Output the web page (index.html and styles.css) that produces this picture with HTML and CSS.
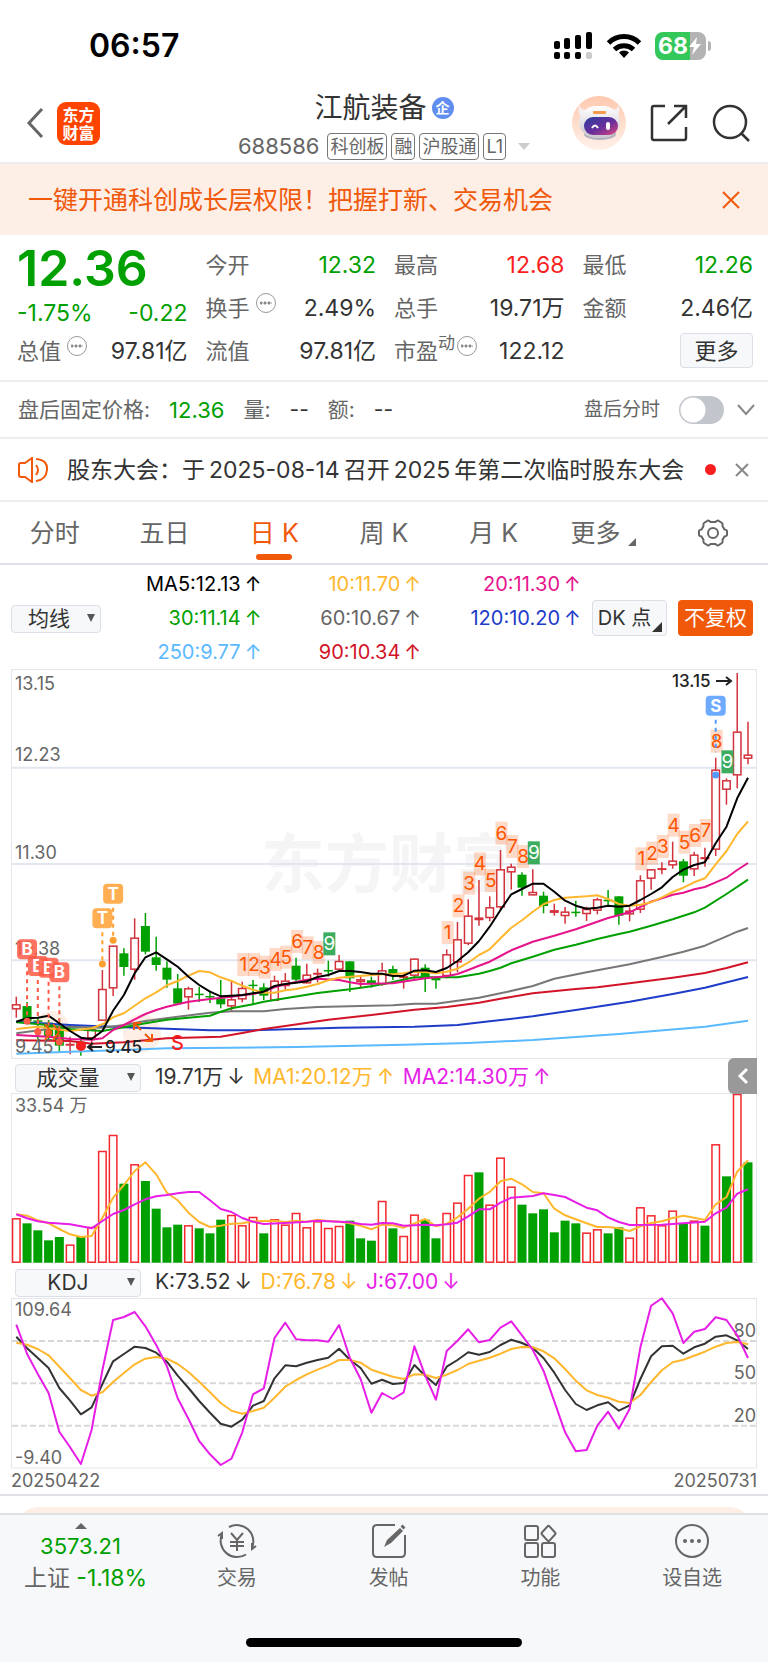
FILE: index.html
```html
<!DOCTYPE html>
<html lang="zh-CN">
  <head>
    <meta charset="UTF-8" />
    <meta name="viewport" content="width=device-width, initial-scale=1.0" />
    <title>江航装备 688586</title>
    <link rel="stylesheet" href="styles.css">
  </head>
  <body>
    <div class="status">
      <span class="time">06:57</span>
      <div class="status-icons">
        <svg width="42" height="28" viewBox="0 0 42 28">
          <rect x="1" y="9" width="6" height="8" rx="2" />
          <rect x="11" y="6" width="6" height="11" rx="2" />
          <rect x="22" y="3" width="6" height="14" rx="2" />
          <rect x="33" y="0" width="6" height="17" rx="2" />
          <rect x="1" y="20" width="6" height="7" rx="2" />
          <rect x="11" y="20" width="6" height="7" rx="2" />
          <rect x="22" y="20" width="6" height="7" rx="2" />
          <rect x="33" y="20" width="6" height="7" rx="2" fill="#ccc" />
        </svg>
        <svg width="36" height="26" viewBox="0 0 36 26" fill="none" stroke="#000" stroke-width="5">
          <path d="M2.500 10a22 22 0 0 1 31 0" />
          <path d="M8.500 16.500a14 14 0 0 1 19 0" />
          <path d="M18 25l-5-5.500a7.500 7.500 0 0 1 10 0z" fill="#000" stroke="none" />
        </svg>
        <div class="battery">
          <span>68</span>
          <svg width="14" height="20" viewBox="0 0 14 20"><path d="M9 1L1 11h5l-2 8 9-11H8z" fill="#fff" /></svg>
        </div>
      </div>
    </div>

    <header class="header">
      <div class="header-left">
        <button class="icon-btn" aria-label="返回">
          <svg width="18" height="32" viewBox="0 0 18 32" fill="none" stroke="#666" stroke-width="3"><path d="M16 2L3 16l13 14" /></svg>
        </button>
        <div class="logo">东方<br>财富</div>
      </div>
      <div class="header-mid">
        <h1>江航装备<span class="qi">企</span></h1>
        <div class="code">
          <span class="num">688586</span>
          <span class="tag">科创板</span><span class="tag">融</span><span class="tag">沪股通</span><span class="tag">L1</span>
          <i class="tri-light"></i>
        </div>
      </div>
      <div class="header-right">
        <svg width="54" height="54" viewBox="0 0 54 54">
          <defs>
            <linearGradient id="halo" x1="0" y1="0" x2="0" y2="1"><stop offset="0" stop-color="#ffc8ae" /><stop offset="1" stop-color="#fff1ea" /></linearGradient>
            <linearGradient id="face" x1="0" y1="0" x2="1" y2="1"><stop offset="0" stop-color="#2b3ea0" /><stop offset=".55" stop-color="#6a2f9c" /><stop offset="1" stop-color="#e0457e" /></linearGradient>
            <linearGradient id="head" x1="0" y1="0" x2="0" y2="1"><stop offset="0" stop-color="#fff" /><stop offset="1" stop-color="#c9c6cf" /></linearGradient>
          </defs>
          <circle cx="27" cy="27" r="27" fill="url(#halo)" />
          <path d="M7 9q-2 9 4 14l7-8q-8 0-11-6zM47 9q2 9-4 14l-7-8q8 0 11-6z" fill="#f4f0f2" />
          <ellipse cx="28" cy="38" rx="16" ry="6" fill="#aeb0bc" />
          <rect x="7" y="10" width="41" height="32" rx="17" fill="url(#head)" />
          <rect x="21" y="15" width="13" height="3" rx="1" fill="#f49a4c" />
          <rect x="12" y="21" width="34" height="18" rx="9" fill="url(#face)" />
          <path d="M20 32q3-5 6 0" fill="none" stroke="#fff" stroke-width="2" />
          <rect x="34" y="26" width="4" height="8" rx="2" fill="#fff" />
        </svg>
        <button class="icon-btn" aria-label="分享">
          <svg width="38" height="38" viewBox="0 0 38 38" fill="none" stroke="#333" stroke-width="2.500"><path d="M15 2H4q-2 0-2 2v30q0 2 2 2h30q2 0 2-2V23M24 2h12v12M36 2L18 20" /></svg>
        </button>
        <button class="icon-btn" aria-label="搜索">
          <svg width="38" height="38" viewBox="0 0 38 38" fill="none" stroke="#333" stroke-width="2.500"><circle cx="18" cy="18" r="16" /><path d="M29 29l8 8" /></svg>
        </button>
      </div>
    </header>

    <div class="banner">
      <a href="#">一键开通科创成长层权限！把握打新、交易机会</a>
      <button class="icon-btn" aria-label="关闭">
        <svg width="18" height="18" viewBox="0 0 18 18" stroke="#f0590a" stroke-width="2"><path d="M1 1l16 16M17 1L1 17" /></svg>
      </button>
    </div>

    <section class="quote">
      <div class="col">
        <div class="price">12.36</div>
        <div class="row change green"><span>-1.75%</span><span>-0.22</span></div>
        <div class="row"><label>总值<i class="more-dot"></i></label><span>97.81亿</span></div>
      </div>
      <div class="col">
        <div class="row"><label>今开</label><span class="green">12.32</span></div>
        <div class="row"><label>换手<i class="more-dot"></i></label><span>2.49%</span></div>
        <div class="row"><label>流值</label><span>97.81亿</span></div>
      </div>
      <div class="col">
        <div class="row"><label>最高</label><span class="red">12.68</span></div>
        <div class="row"><label>总手</label><span>19.71万</span></div>
        <div class="row"><label>市盈<sup>动</sup><i class="more-dot"></i></label><span>122.12</span></div>
      </div>
      <div class="col">
        <div class="row"><label>最低</label><span class="green">12.26</span></div>
        <div class="row"><label>金额</label><span>2.46亿</span></div>
        <div class="row end"><button class="btn-more">更多</button></div>
      </div>
    </section>

    <section class="after">
      <span>盘后固定价格:</span>
      <span class="green">12.36</span>
      <span>量:</span><span class="dark">--</span>
      <span>额:</span><span class="dark">--</span>
      <label class="after-label" for="after-switch">盘后分时</label>
      <input type="checkbox" class="switch" id="after-switch" />
      <svg width="18" height="12" viewBox="0 0 18 12" fill="none" stroke="#888" stroke-width="2"><path d="M1 1l8 9 8-9" /></svg>
    </section>

    <section class="notice">
      <svg width="31" height="26" viewBox="0 0 31 26" fill="none" stroke="#f0590a" stroke-width="2">
        <path d="M1 8q0-2 2-2h4l7-5v24l-7-5H3q-2 0-2-2zM18 8q4 5 0 10M18 2q12 1 11 11t-11 11" />
      </svg>
      <a href="#">股东大会：于<b>2025-08-14</b>召开<b>2025</b>年第二次临时股东大会</a>
      <i class="red-dot"></i>
      <button class="icon-btn" aria-label="关闭公告">
        <svg width="14" height="14" viewBox="0 0 14 14" stroke="#888" stroke-width="2"><path d="M1 1l12 12M13 1L1 13" /></svg>
      </button>
    </section>

    <nav class="tabs">
      <button>分时</button>
      <button>五日</button>
      <button class="active">日 K</button>
      <button>周 K</button>
      <button>月 K</button>
      <button>更多<i class="corner"></i></button>
      <button aria-label="设置">
        <svg width="30" height="28" viewBox="0 0 30 28" fill="none" stroke="#666" stroke-width="2">
          <path d="M10 1.500q1.500 0 2.500 1.500h5q1-1.500 2.500-1.500l4 2.500q1 1 .5 3l2 3.500q2.500.500 2.500 1.500v4q0 1-2.500 1.500l-2 3.500q.5 2-.5 3l-4 2.500q-1.500 0-2.500-1.500h-5q-1 1.500-2.500 1.500l-4-2.500q-1-1-.5-3l-2-3.500Q1 17 1 16v-4q0-1 2.500-1.500l2-3.500q-.5-2 .5-3z" />
          <circle cx="15" cy="14" r="5" />
        </svg>
      </button>
    </nav>

    <section class="ma">
      <div class="select-box ma-select">
        <select aria-label="主图指标"><option>均线</option></select>
      </div>
      <div class="ma-list">
        <span class="c-black">MA5:12.13<i>↑</i></span><span class="c-yellow">10:11.70<i>↑</i></span><span class="c-pink">20:11.30<i>↑</i></span>
        <span class="c-green">30:11.14<i>↑</i></span><span class="c-gray">60:10.67<i>↑</i></span><span class="c-blue">120:10.20<i>↑</i></span>
        <span class="c-sky">250:9.77<i>↑</i></span><span class="c-red">90:10.34<i>↑</i></span>
      </div>
      <button class="btn-dk">DK 点<i class="corner"></i></button>
      <button class="btn-fq">不复权</button>
    </section>

    <main class="charts">
      <svg id="kline" class="chart" viewBox="0 0 746 389"></svg>
      <div class="legend">
        <div class="select-box">
          <select aria-label="副图指标一"><option>成交量</option></select>
        </div>
        <span class="c-dark">19.71万<i>↓</i></span>
        <span class="c-yellow">MA1:20.12万<i>↑</i></span>
        <span class="c-purple">MA2:14.30万<i>↑</i></span>
        <button class="collapse" aria-label="展开侧栏">
          <svg width="12" height="18" viewBox="0 0 12 18" fill="none" stroke="#fff" stroke-width="3"><path d="M10 2L3 9l7 7" /></svg>
        </button>
      </div>
      <svg id="volume" class="chart" viewBox="0 0 746 170"></svg>
      <div class="legend">
        <div class="select-box">
          <select aria-label="副图指标二"><option>KDJ</option></select>
        </div>
        <span class="c-dark">K:73.52<i>↓</i></span>
        <span class="c-yellow">D:76.78<i>↓</i></span>
        <span class="c-purple">J:67.00<i>↓</i></span>
      </div>
      <svg id="kdj" class="chart" viewBox="0 0 746 170"></svg>
      <div class="dates"><span>20250422</span><span>20250731</span></div>
    </main>

    <div class="card-peek"></div>

    <footer class="footer">
      <nav class="bottom-nav">
        <a href="#" class="index green">
          <i class="tri-up"></i>
          <span>3573.21</span>
          <span class="index-change"><em>上证</em> -1.18%</span>
        </a>
        <a href="#">
          <svg width="40" height="36" viewBox="0 0 40 36" fill="none" stroke="#666" stroke-width="2">
            <path d="M12 4a16.500 16.500 0 0 1 23 21M29 31.500A16.500 16.500 0 0 1 5 11M1 13l4-3v6M39 23l-4 3v-6" />
            <path d="M14 10l6 7 6-7M20 17v11M13 19h14M13 23h14" />
          </svg>
          交易
        </a>
        <a href="#">
          <svg width="36" height="36" viewBox="0 0 36 36" fill="none" stroke="#666" stroke-width="2">
            <path d="M24 2H6q-4 0-4 4v24q0 4 4 4h24q4 0 4-4V12" />
            <path d="M13 24l3-7L29 5l3 3-12 12z" fill="#666" stroke="none" /><path d="M31 5l2-2" stroke-width="4" />
          </svg>
          发帖
        </a>
        <a href="#">
          <svg width="34" height="36" viewBox="0 0 34 36" fill="none" stroke="#666" stroke-width="2">
            <rect x="2" y="3" width="13" height="14" rx="2" /><rect x="2" y="20" width="13" height="14" rx="2" /><rect x="19" y="20" width="13" height="14" rx="2" />
            <path d="M24.500 3.500q1-1.500 2 0l5.500 6q1 1 0 2l-5.500 6q-1 1.500-2 0l-5.500-6q-1-1 0-2z" />
          </svg>
          功能
        </a>
        <a href="#">
          <svg width="36" height="36" viewBox="0 0 36 36" fill="none" stroke="#666" stroke-width="2">
            <circle cx="18" cy="18" r="16" />
            <g fill="#666" stroke="none"><circle cx="11" cy="18" r="2" /><circle cx="18" cy="18" r="2" /><circle cx="25" cy="18" r="2" /></g>
          </svg>
          设自选
        </a>
      </nav>
      <div class="home-bar"></div>
    </footer>
    <script src="script.js"></script>
  </body>
</html>
```
FILE: styles.css
```css
* {
  margin: 0;
  padding: 0;
  box-sizing: border-box;
}
body {
  font-family: Inter, "Noto Sans CJK SC", sans-serif;
  font-size: 22px;
  line-height: 30px;
  color: #333;
  background: #fff;
  white-space: nowrap;
}
button,
select {
  font: inherit;
  color: inherit;
  border: 0;
  background: none;
  white-space: nowrap;
}
a {
  color: inherit;
  text-decoration: none;
}
i,
em {
  font-style: normal;
}
b {
  font-weight: 400;
}
svg {
  display: block;
  flex: none;
}
.icon-btn {
  display: block;
}
.green {
  color: #00a000;
}
.red {
  color: #f91f1f;
}

/* 状态栏 */
.status {
  height: 82px;
  padding: 10px 56px 0 89px;
  display: flex;
  align-items: center;
  justify-content: space-between;
}
.time {
  font-size: 32px;
  font-weight: 600;
  color: #000;
}
.status-icons {
  display: flex;
  align-items: center;
  gap: 11px;
}
.battery {
  width: 51px;
  height: 28px;
  margin: 0 6px 0 2px;
  padding-left: 3px;
  display: flex;
  align-items: center;
  position: relative;
  border-radius: 8px;
  background: linear-gradient(90deg, #34c759 69%, #b3b3b3 69%);
  font-size: 23px;
  font-weight: 700;
  color: #fff;
}
.battery::after {
  content: "";
  width: 3px;
  height: 10px;
  position: absolute;
  right: -5px;
  top: 9px;
  border-radius: 0 3px 3px 0;
  background: #b3b3b3;
}

/* 头部 */
.header {
  height: 82px;
  padding: 0 18px;
  display: grid;
  grid-template-columns: 1fr auto 1fr;
  align-items: center;
  border-bottom: 2px solid #eceef1;
}
.header-left {
  padding-left: 8px;
  display: flex;
  align-items: center;
  gap: 13px;
}
.logo {
  width: 43px;
  height: 43px;
  padding-top: 4px;
  border-radius: 9px;
  background: #ff4400;
  color: #fff;
  font-size: 16px;
  font-weight: 700;
  line-height: 18px;
  text-align: center;
}
.header-mid {
  padding-top: 6px;
  text-align: center;
}
h1 {
  display: flex;
  align-items: center;
  justify-content: center;
  font-size: 28px;
  line-height: 40px;
  font-weight: 400;
}
.qi {
  width: 22px;
  height: 22px;
  margin-left: 5px;
  border-radius: 50%;
  background: #5f8df0;
  color: #fff;
  font-size: 14px;
  line-height: 21px;
  font-weight: 700;
}
.code {
  display: flex;
  align-items: center;
  gap: 4px;
  color: #666;
  line-height: 36px;
}
.code .num {
  margin-right: 4px;
  font-size: 22px;
}
.tag {
  padding: 0 2px;
  border: 1px solid #777;
  border-radius: 4px;
  font-size: 18px;
  line-height: 25px;
}
.tri-light {
  margin-left: 8px;
  border: 6px solid transparent;
  border-top: 7px solid #ccc;
  border-bottom: 0;
}
.header-right {
  display: flex;
  align-items: center;
  justify-content: flex-end;
  gap: 24px;
}

.banner {
  height: 71px;
  padding: 0 28px;
  display: flex;
  align-items: center;
  justify-content: space-between;
  background: #fdeee6;
  color: #f0590a;
  font-size: 25px;
}

/* 行情 */
.quote {
  padding: 8px 15px 8px 17px;
  display: grid;
  grid-template-columns: repeat(4, 1fr);
  gap: 18px;
  border-bottom: 2px solid #eceef1;
}
.row {
  height: 43px;
  display: flex;
  align-items: center;
  justify-content: space-between;
}
.row span {
  font-size: 23px;
}
.row label {
  display: flex;
  align-items: center;
  color: #666;
}
.price {
  height: 54px;
  font-size: 50px;
  line-height: 50px;
  font-weight: 600;
  color: #00a000;
}
.change {
  height: 32px;
}
.end {
  justify-content: flex-end;
}
sup {
  margin-bottom: 16px;
  font-size: 17px;
  line-height: 20px;
}
.more-dot {
  width: 20px;
  height: 20px;
  margin: 0 0 10px 6px;
  border: 1px solid #999;
  border-radius: 50%;
  background: radial-gradient(circle at 2px 2px, #888 1px, transparent 2px) 3px 7px / 4px 4px repeat-x content-box;
  padding: 0 3px;
}
sup + .more-dot {
  margin-left: 2px;
}
.btn-more {
  width: 73px;
  height: 35px;
  border: 1px solid #dcdfe6;
  border-radius: 4px;
  background: #f7f8fa;
}

.after {
  height: 57px;
  padding: 0 13px 0 18px;
  display: flex;
  align-items: center;
  gap: 19px;
  border-bottom: 2px solid #eceef1;
  color: #666;
  font-size: 21px;
}
.after .green {
  font-size: 22px;
}
.dark {
  color: #333;
}
.after-label {
  margin-left: auto;
  font-size: 19px;
}
.switch {
  width: 45px;
  height: 28px;
  margin-right: -6px;
  appearance: none;
  border-radius: 14px;
  background: radial-gradient(circle at 14px 14px, #fff 12px, transparent 13px) #c2c5cc;
}

.notice {
  height: 63px;
  padding: 0 19px 0 18px;
  display: flex;
  align-items: center;
  border-bottom: 2px solid #eceef1;
  font-size: 23px;
}
.notice a {
  margin: 0 auto 0 18px;
}
.notice b {
  padding: 0 4px;
}
.red-dot {
  width: 11px;
  height: 11px;
  margin-right: 19px;
  border-radius: 50%;
  background: #f91f1f;
}

/* 周期切换 */
.tabs {
  height: 63px;
  display: grid;
  grid-template-columns: repeat(7, 1fr);
  border-bottom: 2px solid #dfe1e7;
  color: #666;
  font-size: 25px;
}
.tabs button {
  display: flex;
  align-items: center;
  justify-content: center;
  position: relative;
}
.tabs .active {
  color: #f0590a;
}
.tabs .active::after {
  content: "";
  width: 36px;
  height: 6px;
  position: absolute;
  bottom: 3px;
  left: 50%;
  transform: translate(-50%, 0);
  border-radius: 3px;
  background: #f0590a;
}
.corner {
  border: 4px solid;
  border-top-color: transparent;
  border-left-color: transparent;
}
.tabs .corner {
  margin: 18px 0 0 8px;
}

/* 均线 */
.ma {
  padding: 2px 15px 0 11px;
  display: flex;
  align-items: center;
  font-size: 20px;
}
.ma-list {
  flex: 1;
  margin-right: 12px;
  display: grid;
  grid-template-columns: repeat(3, 1fr);
  grid-auto-rows: 34px;
  line-height: 34px;
  text-align: right;
}
.ma-list i,
.legend i {
  display: inline-block;
  width: 14px;
  margin-left: 4px;
  text-align: center;
}
.ma-list span {
  padding-right: 2px;
}
.select-box {
  width: 126px;
  height: 28px;
  position: relative;
}
.select-box::after {
  content: "";
  position: absolute;
  right: 6px;
  top: 10px;
  border: 4px solid transparent;
  border-top: 8px solid #555;
  border-bottom: 0;
  pointer-events: none;
}
.select-box select {
  width: 100%;
  height: 28px;
  padding-right: 20px;
  appearance: none;
  border: 1px solid #dcdfe6;
  border-radius: 4px;
  background: #f7f8fa;
  font-size: 21px;
  line-height: 26px;
  text-align: center;
  text-align-last: center;
}
.ma-select {
  width: 90px;
}
.ma-select select {
  padding-right: 14px;
}
.btn-dk {
  width: 75px;
  height: 36px;
  padding-right: 10px;
  position: relative;
  border: 1px solid #dcdfe6;
  border-radius: 4px;
  background: #f7f8fa;
}
.btn-dk .corner {
  position: absolute;
  right: 4px;
  bottom: 3px;
  border-width: 5px;
}
.btn-fq {
  width: 75px;
  height: 36px;
  margin-left: 11px;
  border-radius: 4px;
  background: #f0590a;
  color: #fff;
  font-size: 21px;
}
.c-black { color: #000; }
.c-dark { color: #333; }
.c-yellow { color: #ffb72e; }
.c-pink { color: #e6148c; }
.c-green { color: #00a000; }
.c-gray { color: #666; }
.c-blue { color: #1e3cc8; }
.c-sky { color: #5ab9ff; }
.c-red { color: #d21428; }
.c-purple { color: #e61ee6; }

/* 图表 */
.charts {
  padding: 0 11px;
}
.chart {
  width: 100%;
  height: auto;
  overflow: visible;
}
.chart text {
  font-size: 18px;
  fill: #666;
}
.chart .frame {
  fill: none;
  stroke: #e4e6ec;
}
.chart .grid {
  stroke: #e2e6ee;
  stroke-width: 2;
}
.chart .dash {
  stroke: #d8d8d8;
  stroke-width: 2;
  stroke-dasharray: 6 3;
}
.chart .line {
  fill: none;
  stroke-width: 2;
  stroke-linejoin: round;
}
.chart .mark {
  stroke-width: 2;
  stroke-dasharray: 4 4;
}
.chart .nine {
  font-size: 19px;
  text-anchor: middle;
  fill: #ff5500;
}
.chart .badge {
  font-size: 17px;
  font-weight: 700;
  text-anchor: middle;
  fill: #fff;
}
.chart .tip {
  font-size: 17px;
  font-weight: 500;
  fill: #222;
}
.chart .sell {
  font-size: 20px;
  font-weight: 500;
  fill: #f91f1f;
}
.chart .watermark {
  font-size: 64px;
  font-weight: 700;
  fill: #f5f5f5;
}
.chart .end {
  text-anchor: end;
}
.legend {
  height: 35px;
  padding: 2px 0 0 4px;
  display: flex;
  align-items: center;
  gap: 12px;
  position: relative;
  font-size: 21px;
}
.legend .select-box {
  margin-right: 2px;
}
.collapse {
  width: 29px;
  height: 36px;
  position: absolute;
  right: 0;
  top: 0;
  display: flex;
  align-items: center;
  justify-content: center;
  border-radius: 6px 0 0 6px;
  background: #999;
}
.dates {
  height: 26px;
  display: flex;
  justify-content: space-between;
  line-height: 26px;
  font-size: 18px;
  color: #666;
}
.card-peek {
  height: 19px;
  padding: 11px 15px 0;
  overflow: hidden;
  border-top: 2px solid #dfe1e7;
}
.card-peek::before {
  content: "";
  display: block;
  height: 60px;
  border-radius: 24px;
  background: #fdeee6;
}

/* 底部 */
.footer {
  height: 149px;
  position: relative;
  border-top: 2px solid #dfe1e7;
  background: #f7f8fa;
}
.bottom-nav {
  padding-top: 8px;
  display: grid;
  grid-template-columns: 161px repeat(4, 1fr);
  font-size: 20px;
  color: #666;
}
.bottom-nav a {
  display: flex;
  flex-direction: column;
  align-items: center;
  gap: 4px;
}
.bottom-nav .index {
  gap: 2px;
  font-size: 22px;
  color: #00a000;
}
.index-change {
  padding-left: 10px;
  font-size: 23px;
}
.index em {
  color: #666;
}
.tri-up {
  border: 6px solid transparent;
  border-bottom: 6px solid #666;
  border-top: 0;
}
.home-bar {
  width: 36%;
  height: 9px;
  position: absolute;
  left: 32%;
  bottom: 15px;
  border-radius: 5px;
  background: #000;
}
```
FILE: script.js
```js
// 数据纵坐标按 3 倍精度存储，绘制时除以 3
var RED = "#d2323c";
var GREEN = "#00a000";
var STEP = 10.76;

function x(i) {
  return 5.3 + i * STEP;
}

// 每根K线：颜色, 实体上, 实体下, 最高, 最低
var candles = [
  "r,1018,1033,995,1058", "g,1023,1068,1011,1075", "g,1066,1070,1057,1122", "g,1073,1115,1065,1125",
  "g,1085,1142,1060,1160", "r,1137,1140,1115,1168", "g,1130,1150,1120,1172", "r,1093,1120,1090,1158",
  "r,972,1067,915,1067", "r,842,970,842,993", "g,865,906,850,932", "r,818,914,760,944",
  "g,783,860,744,868", "g,877,900,815,917", "g,908,944,889,968", "g,970,1016,927,1016",
  "r,970,997,965,1034", "g,986,989,965,1011", "g,993,996,980,1014", "g,1000,1018,945,1030",
  "r,1003,1024,945,1040", "r,969,1003,950,1012", "g,959,962,945,1020", "g,967,992,955,1005",
  "r,947,1007,932,1007", "r,947,963,924,973", "g,902,944,878,950", "r,929,955,896,955",
  "r,924,927,911,952", "g,915,918,887,935", "r,888,914,870,914", "g,889,940,889,981",
  "r,943,951,930,967", "g,946,954,935,968", "r,916,958,893,962", "g,912,932,902,945",
  "r,934,938,925,971", "r,881,932,881,945", "g,908,938,898,981", "g,936,946,936,971",
  "r,868,933,853,940", "r,823,892,771,922", "r,752,836,703,841", "r,758,765,645,782",
  "r,727,759,694,769", "r,613,727,555,734", "r,605,622,596,674", "g,629,668,622,692",
  "r,681,691,613,691", "g,692,723,680,745", "r,736,743,716,752", "r,740,753,726,776",
  "g,740,743,707,755", "r,732,747,725,768", "r,703,737,698,748", "g,704,709,675,723",
  "g,694,752,694,779", "r,737,748,727,769", "r,646,734,631,744", "r,613,641,613,674",
  "r,610,614,592,628", "r,587,601,530,611", "g,589,632,582,652", "r,569,613,560,633",
  "r,577,582,548,605", "r,314,554,278,573", "r,346,374,340,419", "r,200,331,24,370",
  "r,269,281,170,298"
];

// 均线：颜色 + "序号:纵坐标"
var maLines = [
  ["#5ab9ff", "0:1166 5:1160 10:1155 14:1150 20:1148 26:1146 36:1139 42:1134 48:1125 56:1107 64:1085 68:1067"],
  ["#1e3cc8", "0:1070 5:1080 10:1087 14:1091 18:1096 22:1096 30:1088 37:1085 41:1080 44:1069 48:1054 52:1035 57:1010 61:987 64:968 68:936"],
  ["#d21428", "0:1126 5:1128 7:1136 10:1132 14:1120 19:1115 21:1104 23:1092 25:1083 29:1064 33:1050 37:1034 40:1026 43:1013 45:1001 48:985 52:972 54:967 57:955 61:938 64:924 66:909 68:892"],
  ["#777", "0:1105 3:1092 5:1085 8:1088 10:1080 12:1068 15:1055 18:1043 20:1039 23:1039 25:1032 28:1026 31:1024 35:1021 37:1016 39:1016 41:1007 43:998 45:985 48:963 50:941 53:922 57:898 60:876 62:860 64:842 66:814 67:800 68:789"],
  ["#00a000", "0:1072 3:1080 5:1092 8:1098 10:1087 12:1075 14:1064 18:1052 19:1040 20:1030 22:1018 23:1010 25:1000 28:984 31:973 33:964 35:951 37:937 41:937 43:926 44:918 45:908 46:895 48:875 50:854 52:839 54:822 56:807 57:800 59:782 61:763 63:742 64:728 66:687 68:644"],
  ["#e6148c", "0:1110 3:1115 5:1122 7:1124 8:1120 9:1095 10:1080 11:1063 12:1047 13:1035 14:1025 16:1010 18:1002 20:995 21:991 22:987 23:980 24:967 25:958 27:944 28:941 30:945 31:952 32:957 35:955 38:940 40:934 41:927 42:915 43:902 44:890 45:873 46:856 48:830 50:812 52:793 54:770 55:759 57:742 59:710 61:689 62:683 63:673 64:666 65:652 66:638 67:615 68:594"],
  ["#ffb72e", "0:1092 2:1085 5:1098 7:1090 8:1078 9:1057 10:1045 11:1022 12:1000 13:982 14:961 15:948 16:932 17:918 18:922 19:937 20:948 21:962 22:974 23:983 24:983 25:976 26:972 27:965 28:957 29:946 30:938 31:935 34:928 35:928 36:925 37:920 38:921 39:925 40:920 41:911 42:893 43:870 44:853 45:820 46:788 47:766 48:740 49:718 50:705 51:698 52:696 53:694 54:691 55:702 56:717 57:722 58:719 59:712 60:697 61:681 62:668 63:652 64:640 65:598 66:558 67:507 68:469"],
  ["#000", "0:1070 1:1060 2:1058 3:1052 4:1075 5:1098 6:1118 7:1122 8:1098 9:1037 10:990 11:925 12:877 13:862 14:883 15:905 16:935 17:960 18:980 19:994 20:992 21:990 22:985 23:980 24:963 25:957 26:953 27:949 28:936 29:930 30:918 31:918 32:921 33:926 34:926 35:933 36:932 37:917 38:916 39:921 40:909 41:888 42:862 43:828 44:785 45:735 46:688 47:672 48:656 49:656 50:680 51:707 52:722 53:731 54:728 55:722 56:725 57:722 58:705 59:687 60:667 61:636 62:614 63:600 64:592 65:535 66:485 67:400 68:338"]
];

// 九转：起始序号 + 每个数字的中心
var nines = [
  [21, [897, 897, 905, 882, 875, 828, 847, 861, 835]],
  [40, [801, 721, 653, 595, 645, 503, 543, 573, 562]],
  [58, [580, 563, 543, 479, 530, 510, 495, 227, 289]]
];

// 买卖点：文字, 序号, 标签中心, 圆点, 颜色
var marks = [
  ["B", 1, 853, 1069, "#ff5a46"], ["B", 2, 903, 1100, "#ff5a46"], ["B", 3, 908, 1103, "#ff5a46"], ["B", 4, 922, 1131, "#ff5a46"],
  ["T", 8, 760, 897, "#ffa032"], ["T", 9, 686, 826, "#ffa032"], ["S", 65, 122, 330, "#559bff"]
];

var volumes = "r492 g507 g528 g558 g548 r571 g546 r518 r290 r242 g388 r330 g380 g463 g519 g511 r513 g522 g537 g496 r482 r513 r488 g537 r495 r511 r476 r519 r501 r521 r515 g499 g552 g559 r440 g522 r545 r481 g496 g552 r476 r445 r362 g354 r451 r310 r397 g451 g477 g465 g534 g499 g507 r535 r525 g537 g519 r550 r459 r483 r513 r469 g508 r499 g514 r270 g366 r119 g324".split(" ");
var volLines = [
  ["#ffb72e", "0:480 1:484 2:498 3:507 4:524 5:540 6:548 7:545 8:490 9:430 10:392 11:350 12:324 13:360 14:415 15:438 16:475 17:503 18:518 19:514 20:508 21:507 22:501 23:500 24:499 25:503 26:499 27:502 28:496 29:500 30:502 31:507 32:514 33:525 34:511 35:513 36:520 37:507 38:494 39:516 40:508 41:489 42:463 43:433 44:413 45:381 46:373 47:390 48:413 49:417 50:463 51:483 52:495 53:507 54:518 55:518 56:522 57:530 58:516 59:506 60:501 61:491 62:484 63:490 64:497 65:450 66:428 67:352 68:318"],
  ["#e61ee6", "0:480 1:492 2:501 3:505 5:510 6:516 7:522 8:500 9:479 10:467 11:450 12:435 13:426 14:422 15:417 16:413 17:413 18:438 19:464 20:473 21:491 22:502 23:509 25:506 27:502 28:499 31:504 32:509 33:511 34:506 35:507 36:514 38:511 39:513 40:510 41:505 42:486 43:465 44:465 45:445 46:430 48:425 49:417 50:422 51:428 52:444 53:460 54:468 55:489 56:503 57:512 60:511 62:507 64:502 65:477 66:460 67:418 68:405"]
];
var kdjLines = [
  ["#333", "0:218 1:253 2:282 3:312 4:372 5:410 6:451 7:430 8:360 9:292 10:270 11:248 12:252 13:266 14:293 15:335 16:372 17:411 18:446 19:479 20:488 21:467 22:425 23:411 24:343 25:304 26:307 27:296 28:288 29:281 30:254 31:287 32:312 33:359 34:347 35:360 36:357 37:303 38:335 39:363 40:308 41:288 42:265 43:272 44:264 45:243 46:227 47:237 48:252 49:282 50:326 51:378 52:420 53:438 54:424 55:415 56:440 57:424 58:345 59:277 60:247 61:245 62:269 63:250 64:239 65:218 66:214 67:229 68:255"],
  ["#ffb72e", "0:236 1:242 2:255 3:274 4:308 5:343 6:378 7:395 8:385 9:354 10:327 11:301 12:284 13:279 14:284 15:300 16:324 17:353 18:385 19:417 20:440 21:449 22:441 23:431 24:401 25:368 26:348 27:331 28:317 29:304 30:288 31:288 32:296 33:317 34:328 35:338 36:345 37:331 38:332 39:342 40:332 41:318 42:300 43:290 44:281 45:269 46:255 47:249 48:250 49:262 50:283 51:315 52:350 53:379 54:393 55:401 56:413 57:417 58:393 59:354 60:319 61:295 62:287 63:275 64:263 65:248 66:237 67:234 68:241"],
  ["#e61ee6", "0:182 1:270 2:330 3:387 4:503 5:550 6:600 7:498 8:318 9:168 10:159 11:144 12:187 13:243 14:307 15:403 16:465 17:531 18:571 19:603 20:584 21:505 22:391 23:373 24:222 25:176 26:226 27:229 28:229 29:233 30:183 31:282 32:345 33:446 34:387 35:405 36:385 37:247 38:335 39:407 40:261 41:230 42:196 43:235 44:228 45:191 46:172 47:214 48:258 49:320 50:412 51:505 52:562 53:558 54:485 55:443 56:494 57:435 58:250 59:125 60:103 61:148 62:237 63:203 64:195 65:160 66:168 67:214 68:282"]
];

function drawLines(lines, top) {
  var html = "";
  lines.forEach(function (line) {
    var points = line[1].split(" ").map(function (p) {
      var a = p.split(":");
      return x(+a[0]).toFixed(1) + "," + ((a[1] - top) / 3).toFixed(1);
    });
    html += '<polyline class="line" stroke="' + line[0] + '" points="' + points.join(" ") + '"/>';
  });
  return html;
}

function box(cx, y1, y2, up, red) {
  if (!up) {
    return '<rect x="' + (cx - 4.5) + '" y="' + y1 + '" width="9" height="' + Math.max(y2 - y1, 1.5) + '" fill="' + GREEN + '"/>';
  }
  return '<rect x="' + (cx - 3.75) + '" y="' + (y1 + 0.5) + '" width="7.5" height="' + Math.max(y2 - y1 - 1, 0.5) + '" fill="#fff" stroke="' + red + '" stroke-width="1.5"/>';
}

function text(px, py, str, cls) {
  return '<text x="' + px + '" y="' + py + '" class="' + (cls || "") + '">' + str + "</text>";
}

function drawKline() {
  var top = 12;
  var y = function (v) { return (v - top) / 3; };
  var html = '<rect class="frame" x=".5" y=".5" width="745" height="389"/>';
  html += text(250, 218, "东方财富", "watermark");
  [308, 597, 886].forEach(function (v) {
    html += '<line class="grid" x1="0" x2="746" y1="' + y(v) + '" y2="' + y(v) + '"/>';
  });
  html += '<circle cx="41" cy="359" r="17" fill="#fdeee6"/><circle cx="131" cy="364" r="19" fill="#fdeee6"/>';
  candles.forEach(function (item, i) {
    var c = item.split(",");
    var cx = x(i);
    var color = c[0] === "r" ? RED : GREEN;
    html += '<line x1="' + cx + '" x2="' + cx + '" y1="' + y(c[3]) + '" y2="' + y(c[4]) + '" stroke="' + color + '" stroke-width="1.5"/>';
    html += box(cx, y(c[1]), y(c[2]), c[0] === "r", RED);
  });
  html += drawLines(maLines, top);
  html += text(4, 21, "13.15") + text(4, 92, "12.23") + text(4, 190, "11.30") + text(4, 286, "10.38") + text(4, 384, "9.45");
  nines.forEach(function (n) {
    n[1].forEach(function (v, k) {
      var cx = x(n[0] + k) + 1;
      html += '<rect x="' + (cx - 6) + '" y="' + (y(v) - 11) + '" width="12" height="23" fill="' + (k === 8 ? "#3cac5f" : "#ff7832") + '" fill-opacity="' + (k === 8 ? 1 : 0.27) + '"/>';
      html += '<text class="nine" x="' + cx + '" y="' + (y(v) + 7) + '"' + (k === 8 ? ' style="fill:#fff"' : "") + ">" + (k + 1) + "</text>";
    });
  });
  marks.forEach(function (m) {
    var cx = x(m[1]);
    html += '<line class="mark" stroke="' + m[4] + '" x1="' + cx + '" x2="' + cx + '" y1="' + (y(m[2]) + 14) + '" y2="' + (m[0] === "S" ? y(262) : y(m[3])) + '"/>';
    html += '<circle cx="' + cx + '" cy="' + y(m[3]) + '" r="3.5" fill="' + m[4] + '"/>';
    html += '<rect x="' + (cx - 10) + '" y="' + (y(m[2]) - 10) + '" width="20" height="20" rx="4" fill="' + m[4] + '" fill-opacity=".85"/>';
    html += text(cx, y(m[2]) + 6, m[0], "badge");
  });
  // 最高最低价
  html += text(661, 18, "13.15", "tip") + '<path d="M705 12h14M715 8l5 4-5 4" fill="none" stroke="#222" stroke-width="2"/>';
  html += text(94, 384, "9.45", "tip") + '<path d="M91 378H78M82 374l-5 4 5 4" fill="none" stroke="#222" stroke-width="2"/>';
  html += '<circle cx="70" cy="377" r="5" fill="#f91f1f"/>' + text(160, 381, "S", "sell");
  html += '<path d="M34 355l6 8-6 8M42 355l6 8-6 8" fill="none" stroke="#f0590a" stroke-width="2"/>';
  html += '<path d="M123 361v-7h7M123 354l7 7M141 365v7h-7M141 372l-7-7" fill="none" stroke="#f0590a" stroke-width="2"/>';
  document.querySelector("#kline").innerHTML = html;
}

function drawVolume() {
  var html = '<rect class="frame" x=".5" y=".5" width="745" height="169"/>';
  volumes.forEach(function (v, i) {
    html += box(x(i), (v.slice(1) - 116) / 3, 169.7, v[0] === "r", "#f5282d");
  });
  html += drawLines(volLines, 116) + text(4, 19, "33.54 万");
  document.querySelector("#volume").innerHTML = html;
}

function drawKdj() {
  var html = '<rect class="frame" x=".5" y=".5" width="745" height="169.500"/>';
  [[231, 80], [358, 50], [485, 20]].forEach(function (g) {
    var gy = (g[0] - 102) / 3;
    html += '<line class="dash" x1="1" x2="745" y1="' + gy + '" y2="' + gy + '"/>' + text(745, gy - 4, g[1], "end");
  });
  html += text(4, 18, "109.64") + text(4, 166, "-9.40") + drawLines(kdjLines, 102);
  document.querySelector("#kdj").innerHTML = html;
}

drawKline();
drawVolume();
drawKdj();
```
